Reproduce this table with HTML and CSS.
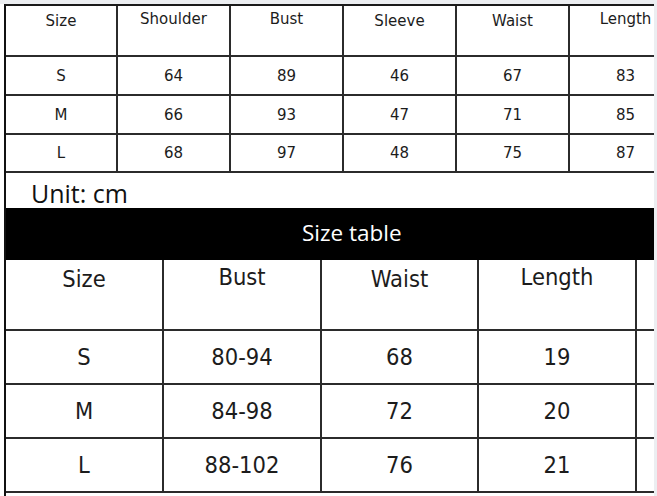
FILE: index.html
```html
<!DOCTYPE html>
<html lang="en">
<head>
<meta charset="utf-8">
<title>Size chart</title>
<link rel="stylesheet" href="styles.css">
</head>
<body>
<div class="page">
  <div class="sheet">
    <div class="grid top">
      <div class="cell head">Size</div>
      <div class="cell head up">Shoulder</div>
      <div class="cell head up">Bust</div>
      <div class="cell head">Sleeve</div>
      <div class="cell head">Waist</div>
      <div class="cell head up">Length</div>

      <div class="cell">S</div><div class="cell">64</div><div class="cell">89</div><div class="cell">46</div><div class="cell">67</div><div class="cell">83</div>
      <div class="cell">M</div><div class="cell">66</div><div class="cell">93</div><div class="cell">47</div><div class="cell">71</div><div class="cell">85</div>
      <div class="cell">L</div><div class="cell">68</div><div class="cell">97</div><div class="cell">48</div><div class="cell">75</div><div class="cell">87</div>
    </div>
    <div class="unit">Unit: cm</div>
    <div class="band">Size table</div>
    <div class="grid bottom">
      <div class="cell head">Size</div>
      <div class="cell head up">Bust</div>
      <div class="cell head">Waist</div>
      <div class="cell head up">Length</div>
      <div class="cell head"></div>

      <div class="cell">S</div><div class="cell">80-94</div><div class="cell">68</div><div class="cell">19</div><div class="cell"></div>
      <div class="cell">M</div><div class="cell">84-98</div><div class="cell">72</div><div class="cell">20</div><div class="cell"></div>
      <div class="cell">L</div><div class="cell">88-102</div><div class="cell">76</div><div class="cell">21</div><div class="cell"></div>
    </div>
  </div>
</div>
</body>
</html>
```

FILE: styles.css
```css
html, body {
  margin: 0;
  padding: 0;
}

body {
  background: #eceef1;
  width: 657px;
  height: 496px;
  overflow: hidden;
}

.page {
  margin-top: 4px;
  width: 654px;
  height: 492px;
  background: #ffffff;
  padding-left: 4px;
  box-sizing: border-box;
}

.sheet {
  width: 650px;
  height: 492px;
  box-sizing: border-box;
  border-left: 2px solid #111111;
  border-top: 2px solid #1a1a1a;
  overflow: hidden;
}

.grid {
  display: grid;
  width: max-content;
  color: #1c1c1c;
}

.cell {
  box-sizing: border-box;
  border-right: 2px solid #2b2b2b;
  border-bottom: 2px solid #2b2b2b;
  display: flex;
  align-items: center;
  justify-content: center;
  white-space: nowrap;
}

.cell.head {
  align-items: flex-start;
}

/* upper table */
.top {
  grid-template-columns: 112px repeat(5, 113px);
  grid-template-rows: 51px 39px 39px 38px;
  font-family: "DejaVu Sans", Verdana, sans-serif;
  font-size: 15px;
  line-height: 18px;
}

.top .head {
  padding-top: 6px;
}

.top .head.up {
  padding-top: 4px;
}

.unit {
  height: 35px;
  box-sizing: border-box;
  padding: 3px 0 0 25px;
  font-family: "Open Sans", sans-serif;
  font-size: 25px;
  line-height: 34px;
  color: #111111;
}

.band {
  height: 52px;
  box-sizing: border-box;
  background: #000000;
  color: #ffffff;
  padding: 10px 0 0 296px;
  font-family: "Open Sans", sans-serif;
  font-size: 22.5px;
  line-height: 30px;
}

/* lower table */
.bottom {
  grid-template-columns: 158px 158px 157px 158px 158px;
  grid-template-rows: 71px 54px 54px 54px;
  font-family: "DejaVu Sans Condensed", "DejaVu Sans", sans-serif;
  font-stretch: condensed;
  font-size: 23.5px;
  line-height: 28px;
}

.bottom .head {
  padding-top: 5px;
}

.bottom .head.up {
  padding-top: 3px;
}
```
